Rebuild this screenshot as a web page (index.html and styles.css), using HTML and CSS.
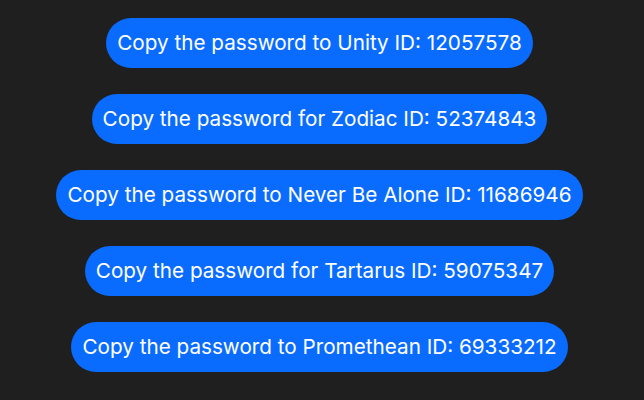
FILE: index.html
```html
<!DOCTYPE html>
<html lang="en">
<head>
<meta charset="utf-8">
<title>Passwords</title>
<link rel="stylesheet" href="styles.css">
</head>
<body>
<main class="list">
  <button class="pill">Copy the password to Unity ID: 12057578</button>
  <button class="pill">Copy the password for Zodiac ID: 52374843</button>
  <button class="pill">Copy the password to Never Be Alone ID: 11686946</button>
  <button class="pill">Copy the password for Tartarus ID: 59075347</button>
  <button class="pill">Copy the password to Promethean ID: 69333212</button>
</main>
</body>
</html>
```
FILE: styles.css
```css
html, body {
  margin: 0;
  background: #1f1f1f;
}
.list {
  display: flex;
  flex-direction: column;
  align-items: center;
  gap: 26px;
  padding: 18px 5px 0 0;
}
.pill {
  font-family: Inter, "Noto Sans", sans-serif;
  font-size: 20.7px;
  line-height: 26px;
  color: #ffffff;
  background: #0a6cff;
  border: none;
  border-radius: 25px;
  padding: 12px 11px;
  cursor: pointer;
}
```
